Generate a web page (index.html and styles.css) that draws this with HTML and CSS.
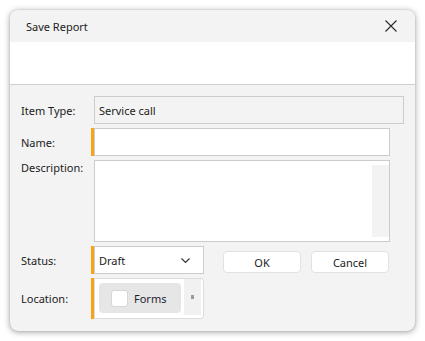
FILE: index.html
```html
<!DOCTYPE html>
<html>
<head>
<meta charset="utf-8">
<link rel="stylesheet" href="styles.css">
</head>
<body>
<div class="dialog">
  <div class="titlebar">
    <span class="title">Save Report</span>
    <span class="close">
      <svg width="12" height="12" viewBox="0 0 12 12"><path d="M0.5 0.5 L11.5 11.5 M11.5 0.5 L0.5 11.5" stroke="#2b2b2b" stroke-width="1.1" fill="none"/></svg>
    </span>
  </div>
  <div class="band"></div>
  <div class="body">
    <div class="row r-item">
      <div class="label">Item Type:</div>
      <div class="slot"><div class="field readonly">Service call</div></div>
    </div>
    <div class="row r-name">
      <div class="label">Name:</div>
      <div class="slot req narrow"><div class="field white"></div></div>
    </div>
    <div class="row r-desc">
      <div class="label top">Description:</div>
      <div class="slot narrow"><div class="field white memo"><div class="vscroll"></div></div></div>
    </div>
    <div class="row r-status">
      <div class="label">Status:</div>
      <div class="slot req combo-slot">
        <div class="field white combo">
          <span>Draft</span>
          <svg width="9" height="5" viewBox="0 0 9 5"><path d="M0.5 0.5 L4.5 4.5 L8.5 0.5" stroke="#333" stroke-width="1.1" fill="none"/></svg>
        </div>
      </div>
      <div class="buttons">
        <button class="btn">OK</button>
        <button class="btn">Cancel</button>
      </div>
    </div>
    <div class="row r-loc">
      <div class="label">Location:</div>
      <div class="slot req combo-slot">
        <div class="field white loc">
          <div class="chip"><span class="check"></span><span>Forms</span></div>
          <div class="mini-scroll"><span class="dot"></span></div>
        </div>
      </div>
    </div>
  </div>
</div>
</body>
</html>
```

FILE: styles.css
```css
* { box-sizing: border-box; }
html, body { margin: 0; padding: 0; background: #ffffff; }
body {
  font-family: "Noto Sans", "Open Sans", sans-serif;
  font-size: 11px;
  color: #1b1b1b;
  width: 425px;
  height: 341px;
  padding: 10px;
}
.dialog {
  width: 405px;
  height: 321px;
  border-radius: 8px;
  overflow: hidden;
  background: #f3f3f3;
  box-shadow: 0 1px 6px rgba(0,0,0,0.38), 0 0 1px rgba(0,0,0,0.3);
  display: flex;
  flex-direction: column;
}
.titlebar {
  height: 32px;
  background: #f3f3f3;
  display: flex;
  align-items: center;
  justify-content: space-between;
  padding: 0 18px 0 16px;
}
.title { font-size: 11px; }
.close { display: flex; width: 12px; height: 12px; }
.band {
  height: 43px;
  background: #ffffff;
  border-bottom: 1px solid #cfcfcf;
}
.body {
  padding: 11px 11px 0 11px;
  display: flex;
  flex-direction: column;
  gap: 4px;
}
.row {
  display: flex;
  align-items: center;
}
.label {
  width: 70px;
  flex: none;
}
.label.top { align-self: flex-start; padding-top: 0; }
.slot {
  padding-left: 3px;
  display: flex;
  flex: 1;
  align-self: stretch;
}
.slot.req { border-left: 3px solid #f7a416; padding-left: 0; }
.slot.narrow { flex: none; width: 299px; }
.slot.combo-slot { flex: none; width: 113px; }
.field {
  flex: 1;
  border: 1px solid #cccccc;
  display: flex;
  align-items: center;
  padding-left: 4px;
}
.readonly { background: #f3f3f3; }
.white { background: #ffffff; }
.r-item, .r-name, .r-status { height: 28px; }
.r-desc { height: 82px; }
.r-loc { height: 41px; }
.memo {
  justify-content: flex-end;
  align-items: stretch;
  padding: 4px 0 4px 0;
}
.vscroll { width: 17px; background: #f3f3f3; }
.combo {
  justify-content: space-between;
  padding-right: 13px;
}
.buttons {
  display: flex;
  gap: 10px;
  margin-left: 19px;
  margin-top: 4px;
}
.btn {
  width: 78px;
  height: 22px;
  background: #ffffff;
  border: 1px solid #e2e2e2;
  border-radius: 4px;
  font-family: inherit;
  font-size: 11px;
  color: #1b1b1b;
  padding: 0;
}
.loc {
  border-color: #dcdcdc;
  border-radius: 0 3px 3px 0;
  padding: 4px 0 0 4px;
  align-items: flex-start;
  gap: 3px;
}
.chip {
  width: 82px;
  height: 30px;
  background: #e6e6e6;
  border-radius: 4px;
  display: flex;
  align-items: center;
  padding-left: 12px;
  gap: 6px;
  color: #1e1e30;
}
.check {
  width: 17px;
  height: 17px;
  background: #ffffff;
  border: 1px solid #d6d6d6;
  border-radius: 3px;
}
.mini-scroll {
  width: 17px;
  height: 36px;
  margin-top: -4px;
  background: #f1f1f1;
  display: flex;
  align-items: center;
  justify-content: center;
}
.dot { width: 3px; height: 4px; background: #9a9a9a; }
```
